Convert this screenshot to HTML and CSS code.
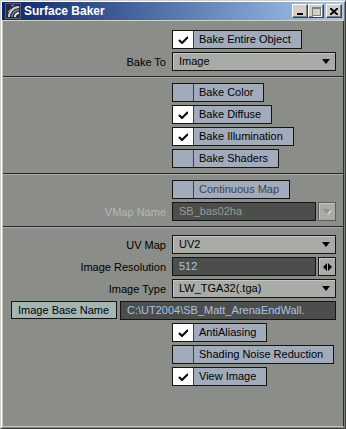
FILE: index.html
```html
<!DOCTYPE html>
<html>
<head>
  <title>Surface Baker</title>
  <link rel="stylesheet" href="styles.css">
</head>
<body>
  <div class="window">
    <div class="titlebar">
      <svg class="app-icon" width="16" height="16" viewBox="0 0 16 16">
        <rect x="0.5" y="0.5" width="15" height="15" fill="#262c3c" stroke="#5a6070"/>
        <path d="M4 14 A10 10 0 0 1 14 4" stroke="#c6cad6" stroke-width="2" fill="none"/>
        <path d="M7 14 A7 7 0 0 1 14 7" stroke="#7c8498" stroke-width="1.5" fill="none"/>
        <path d="M10 14 A4 4 0 0 1 14 10" stroke="#e2e5ec" stroke-width="2" fill="none"/>
        <path d="M3 9 L6 6 M6 3 L9 2" stroke="#9aa0b2" stroke-width="1"/>
      </svg>
      <span class="title">Surface Baker</span>
      <div class="caption-buttons">
        <span class="cap-btn"><span class="glyph-min"></span></span>
        <span class="cap-btn"><span class="glyph-max"></span></span>
        <span class="cap-btn close">
          <svg width="8" height="7" viewBox="0 0 8 7"><path d="M0 0 L8 7 M8 0 L0 7" stroke="#000" stroke-width="2"/></svg>
        </span>
      </div>
    </div>

    <div class="panel">
      <!-- object / target -->
      <div class="group first">
        <div class="row">
          <span class="label"></span>
          <div class="check on">
            <span class="box"><svg width="10" height="8" viewBox="0 0 10 8"><polyline points="1,4 4,7 10,1" fill="none" stroke="#000" stroke-width="2"/></svg></span>
            <span class="text">Bake Entire Object</span>
          </div>
        </div>
        <div class="row">
          <span class="label">Bake To</span>
          <div class="select">Image<span class="arrow"></span></div>
        </div>
      </div>

      <!-- channels -->
      <div class="group channels">
        <div class="row">
          <span class="label"></span>
          <div class="check"><span class="box"></span><span class="text">Bake Color</span></div>
        </div>
        <div class="row">
          <span class="label"></span>
          <div class="check on">
            <span class="box"><svg width="10" height="8" viewBox="0 0 10 8"><polyline points="1,4 4,7 10,1" fill="none" stroke="#000" stroke-width="2"/></svg></span>
            <span class="text">Bake Diffuse</span>
          </div>
        </div>
        <div class="row">
          <span class="label"></span>
          <div class="check on">
            <span class="box"><svg width="10" height="8" viewBox="0 0 10 8"><polyline points="1,4 4,7 10,1" fill="none" stroke="#000" stroke-width="2"/></svg></span>
            <span class="text">Bake Illumination</span>
          </div>
        </div>
        <div class="row">
          <span class="label"></span>
          <div class="check"><span class="box"></span><span class="text">Bake Shaders</span></div>
        </div>
      </div>

      <!-- vertex map (disabled) -->
      <div class="group vmap">
        <div class="row">
          <span class="label"></span>
          <div class="check disabled"><span class="box"></span><span class="text">Continuous Map</span></div>
        </div>
        <div class="row">
          <span class="label disabled">VMap Name</span>
          <div class="field-wrap">
            <div class="field disabled">SB_bas02ha</div>
            <span class="mini-btn disabled"><span class="arrow-dis"></span></span>
          </div>
        </div>
      </div>

      <!-- image output -->
      <div class="group image">
        <div class="row">
          <span class="label">UV Map</span>
          <div class="select">UV2<span class="arrow"></span></div>
        </div>
        <div class="row">
          <span class="label">Image Resolution</span>
          <div class="field-wrap">
            <div class="field">512</div>
            <span class="mini-btn">
              <svg width="9" height="8" viewBox="0 0 9 8"><path d="M0 4 L4 0 L4 8 Z M9 4 L5 0 L5 8 Z" fill="#000"/></svg>
            </span>
          </div>
        </div>
        <div class="row">
          <span class="label">Image Type</span>
          <div class="select">LW_TGA32(.tga)<span class="arrow"></span></div>
        </div>
        <div class="name-row">
          <span class="push-btn">Image Base Name</span>
          <div class="field path">C:\UT2004\SB_Matt_ArenaEndWall.</div>
        </div>
        <div class="row">
          <span class="label"></span>
          <div class="check on">
            <span class="box"><svg width="10" height="8" viewBox="0 0 10 8"><polyline points="1,4 4,7 10,1" fill="none" stroke="#000" stroke-width="2"/></svg></span>
            <span class="text">AntiAliasing</span>
          </div>
        </div>
        <div class="row">
          <span class="label"></span>
          <div class="check"><span class="box"></span><span class="text">Shading Noise Reduction</span></div>
        </div>
        <div class="row">
          <span class="label"></span>
          <div class="check on">
            <span class="box"><svg width="10" height="8" viewBox="0 0 10 8"><polyline points="1,4 4,7 10,1" fill="none" stroke="#000" stroke-width="2"/></svg></span>
            <span class="text">View Image</span>
          </div>
        </div>
      </div>
    </div>
  </div>
</body>
</html>
```

FILE: styles.css
```css
body {
  margin: 0;
  font-family: 'Liberation Sans', Arial, sans-serif;
  font-size: 11px;
  color: #000000;
  background-color: #8b8d89;
}

.window {
  width: 346px;
  height: 429px;
  box-sizing: border-box;
  display: flex;
  flex-direction: column;
  background-color: #d4d0c8;
  border: 1px solid;
  border-color: #d4d0c8 #404040 #404040 #d4d0c8;
  padding: 1px;
  box-shadow: inset 1px 1px 0 #ffffff, inset -1px -1px 0 #808080;
}

.titlebar {
  height: 18px;
  display: flex;
  align-items: center;
  padding-left: 3px;
  background: linear-gradient(to right, #0a246a, #a6caf0);
  margin-bottom: 1px;
}

.app-icon {
  margin-right: 3px;
}

.title {
  flex: 1;
  color: #ffffff;
  font-weight: bold;
  font-size: 12px;
}

.caption-buttons {
  display: flex;
  padding-right: 2px;
}

.cap-btn {
  width: 16px;
  height: 14px;
  box-sizing: border-box;
  background-color: #d4d0c8;
  border: 1px solid;
  border-color: #ffffff #404040 #404040 #ffffff;
  box-shadow: inset -1px -1px 0 #808080;
  display: flex;
  align-items: center;
  justify-content: center;
}

.cap-btn.close {
  margin-left: 2px;
}

.glyph-min {
  width: 6px;
  height: 2px;
  background-color: #000000;
  margin-top: 6px;
}

.glyph-max {
  width: 7px;
  height: 6px;
  border: 1px solid #808080;
  border-top-width: 2px;
  box-shadow: 1px 1px 0 #ffffff;
}

.panel {
  flex: 1;
  background-color: #8b8d89;
  border-left: 1px solid #c4c6c2;
  border-right: 1px solid #2e2e2e;
  border-bottom: 1px solid #c4c6c2;
  display: flex;
  flex-direction: column;
}

.group {
  display: flex;
  flex-direction: column;
  gap: 3px;
  padding: 6px 7px 5px 0;
  border-bottom: 1px solid #262626;
  box-shadow: 0 1px 0 #a9aba7;
}

.group.first {
  padding-top: 9px;
}

.group.image {
  flex: 1;
  border-bottom: none;
  box-shadow: none;
  padding-top: 8px;
}

.row {
  display: grid;
  grid-template-columns: 163px 1fr;
  column-gap: 6px;
  align-items: center;
  height: 19px;
}

.label {
  text-align: right;
  white-space: nowrap;
}

.label.disabled {
  color: #b6b8b4;
}

.check {
  justify-self: start;
  display: flex;
  height: 19px;
  box-sizing: border-box;
  border: 1px solid #141414;
  background-color: #a2abba;
}

.check .box {
  width: 20px;
  border-right: 1px solid #3c4048;
  display: flex;
  align-items: center;
  justify-content: center;
}

.check.on .box {
  background-color: #ffffff;
}

.check .text {
  line-height: 17px;
  padding: 0 10px 0 5px;
  white-space: nowrap;
}

.check.disabled .text {
  color: #404246;
}

.select {
  position: relative;
  height: 19px;
  box-sizing: border-box;
  border: 1px solid #141414;
  background-color: #a9aba7;
  box-shadow: inset 1px 1px 0 #c4c6c2;
  line-height: 17px;
  padding-left: 6px;
}

.select .arrow {
  position: absolute;
  right: 5px;
  top: 6px;
  width: 0;
  height: 0;
  border-left: 4px solid transparent;
  border-right: 4px solid transparent;
  border-top: 5px solid #000000;
}

.field-wrap {
  display: flex;
  gap: 2px;
  height: 19px;
}

.field {
  flex: 1;
  box-sizing: border-box;
  border: 1px solid #141414;
  background-color: #4c4e4c;
  color: #a9c2e6;
  line-height: 17px;
  padding-left: 6px;
  white-space: nowrap;
  overflow: hidden;
}

.field.disabled {
  color: #9a9c98;
}

.mini-btn {
  width: 18px;
  box-sizing: border-box;
  border: 1px solid #141414;
  background-color: #a9aba7;
  box-shadow: inset 1px 1px 0 #c4c6c2;
  display: flex;
  align-items: center;
  justify-content: center;
}

.mini-btn.disabled {
  border-color: #5a5c58;
}

.arrow-dis {
  width: 0;
  height: 0;
  border-left: 4px solid transparent;
  border-right: 4px solid transparent;
  border-top: 5px solid #8e908c;
  filter: drop-shadow(1px 1px 0 #d8dad6);
}

.name-row {
  display: flex;
  gap: 3px;
  height: 19px;
  padding: 0 0 0 8px;
}

.push-btn {
  width: 106px;
  height: 18px;
  box-sizing: border-box;
  border: 1px solid #141414;
  background-color: #a4b6b4;
  line-height: 16px;
  padding-left: 6px;
  white-space: nowrap;
}

.field.path {
  height: 19px;
}
```
